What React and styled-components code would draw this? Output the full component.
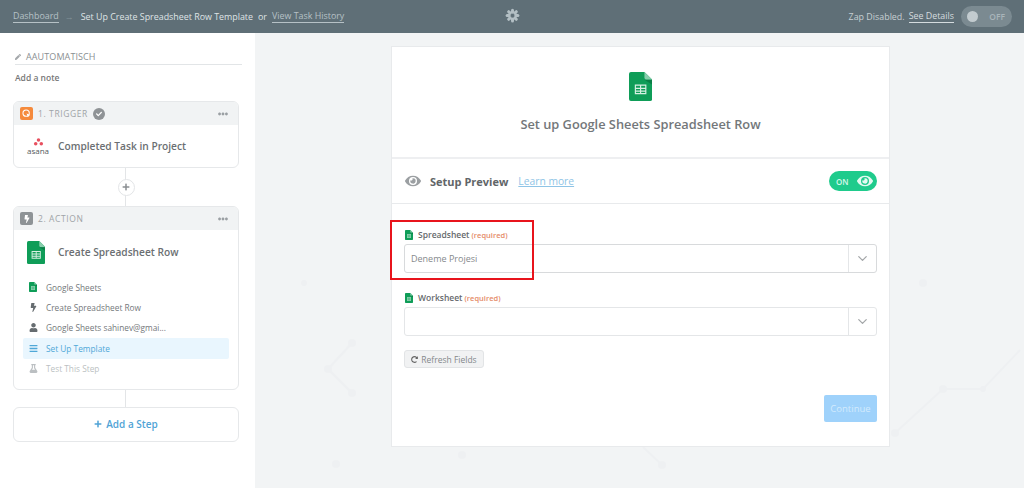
import React from 'react';
import styled, { createGlobalStyle } from 'styled-components';
import { FaEye, FaBolt, FaUser, FaBars, FaFlask, FaPlus, FaCheck, FaPen, FaRedoAlt, FaEllipsisH } from 'react-icons/fa';
import { FiChevronDown } from 'react-icons/fi';

const GlobalStyle = createGlobalStyle`
  html, body { margin: 0; padding: 0; height: 488px; overflow: hidden; }
  body { font-family: "Open Sans", "Liberation Sans", sans-serif; color: #666; background: #f2f4f5; }
  * { box-sizing: border-box; }
`;

const Page = styled.div`
  width: 1024px;
  height: 488px;
  display: flex;
  flex-direction: column;
`;

const TopBar = styled.header`
  height: 33px;
  background: #5f6f77;
  display: flex;
  align-items: center;
  padding: 0 12px 0 13px;
  font-size: 8.9px;
  color: #dfe4e6;
  position: relative;
`;

const Crumbs = styled.div`
  display: flex;
  align-items: center;
  gap: 5px;
  flex: 1;
`;

const BarLink = styled.span`
  color: ${(p) => p.$color || '#b6c1c6'};
  border-bottom: 1px solid currentColor;
  line-height: 12px;
`;

const Arrow = styled.span`
  color: #84939a;
  margin: 0 2px 0 1px;
`;

const GearSpot = styled.div`
  position: absolute;
  left: 505px;
  top: 8px;
  width: 15px;
  height: 15px;
  color: #b3bfc4;
  display: flex;
`;

const ZapStatus = styled.div`
  display: flex;
  align-items: center;
  gap: 4px;
  color: #c7d0d3;
  margin-right: 7px;
`;

const OffToggle = styled.div`
  width: 51px;
  height: 21px;
  border-radius: 11px;
  background: #7b8a91;
  display: flex;
  align-items: center;
  justify-content: space-between;
  padding: 0 7px 0 6px;
  font-size: 8.5px;
  font-weight: 600;
  color: #a9b5ba;

  &::before {
    content: '';
    width: 11px;
    height: 11px;
    border-radius: 50%;
    background: #c2cbcf;
  }
`;

const Body = styled.div`
  flex: 1;
  display: flex;
  position: relative;
  min-height: 0;
`;

const Sidebar = styled.aside`
  width: 255px;
  background: #fff;
  padding: 18px 13px 0;
`;

const ZapName = styled.div`
  margin: 0 0 0 2px;
  width: 227px;
  height: 14px;
  border-bottom: 1px solid #e2e5e7;
  display: flex;
  align-items: flex-start;
  gap: 5px;
  font-size: 9px;
  line-height: 12px;
  color: #8a8f92;
  letter-spacing: 0.1px;

  svg { margin-top: 3px; color: #a4a8ab; }
`;

const AddNote = styled.div`
  margin: 6px 0 0 2px;
  font-size: 8.5px;
  line-height: 13px;
  font-weight: 600;
  color: #777;
  height: 30px;
`;

const StepCard = styled.section`
  width: 226px;
  background: #fff;
  border: 1px solid #e6e8ea;
  border-radius: 6px;
  overflow: hidden;
`;

const StepHead = styled.div`
  height: 23px;
  background: #f1f3f4;
  display: flex;
  align-items: center;
  padding: 0 10px 0 6px;
  gap: 5px;
  font-size: 8.5px;
  font-weight: 500;
  letter-spacing: 0.6px;
  color: #a0a4a7;
`;

const StepBadge = styled.span`
  width: 13px;
  height: 13px;
  border-radius: 2px;
  background: ${(p) => p.$color};
  color: #fff;
  display: flex;
  align-items: center;
  justify-content: center;
  font-size: 8px;
`;

const DoneMark = styled.span`
  width: 12px;
  height: 12px;
  border-radius: 50%;
  background: #8f9396;
  color: #fff;
  display: flex;
  align-items: center;
  justify-content: center;
  font-size: 6px;
`;

const More = styled.span`
  margin-left: auto;
  color: #9a9fa3;
  display: flex;
  font-size: 10px;
`;

const StepTitle = styled.div`
  display: flex;
  align-items: center;
  height: ${(p) => p.$h}px;
  padding-left: 11px;
  font-size: 10.2px;
  font-weight: 600;
  color: #6b6f72;
`;

const TitleIcon = styled.span`
  width: 33px;
  flex: none;
  display: flex;
  justify-content: ${(p) => (p.$start ? 'flex-start' : 'center')};
  padding-right: 7px;
  padding-left: ${(p) => (p.$start ? '2px' : '0')};
`;

const AsanaMark = styled.span`
  display: flex;
  flex-direction: column;
  align-items: center;
  font-size: 8px;
  line-height: 7px;
  font-weight: 400;
  color: #555b60;
  gap: 1px;
`;

const Connector = styled.div`
  width: 226px;
  height: ${(p) => p.$h}px;
  display: flex;
  align-items: center;
  justify-content: center;
  position: relative;

  &::before {
    content: '';
    position: absolute;
    left: 112px;
    top: 0;
    bottom: 0;
    width: 1px;
    background: #e3e5e7;
  }
`;

const PlusDot = styled.span`
  width: 17px;
  height: 17px;
  border-radius: 50%;
  background: #fff;
  border: 1px solid #e3e5e7;
  color: #8b8f92;
  display: flex;
  align-items: center;
  justify-content: center;
  font-size: 8px;
  z-index: 1;
`;

const SubList = styled.ul`
  list-style: none;
  margin: 0;
  padding: 3px 9px 10px;
`;

const SubItem = styled.li`
  height: 20.4px;
  display: flex;
  align-items: center;
  padding-left: 5px;
  gap: 8px;
  font-size: 8.3px;
  font-weight: 500;
  border-radius: 2px;
  color: ${(p) => (p.$active ? '#4fa8d8' : p.$muted ? '#bbbfc2' : '#74787b')};
  background: ${(p) => (p.$active ? '#e9f6fe' : 'transparent')};
`;

const SubIcon = styled.span`
  width: 10px;
  display: flex;
  justify-content: center;
  font-size: 9px;
  color: ${(p) => p.$color || '#666c70'};
`;

const AddStep = styled.button`
  width: 226px;
  height: 35px;
  background: #fff;
  border: 1px solid #e6e8ea;
  border-radius: 6px;
  display: flex;
  align-items: center;
  justify-content: center;
  gap: 4px;
  font-family: inherit;
  font-size: 10px;
  font-weight: 600;
  color: #4fa3d6;
`;

const Canvas = styled.main`
  flex: 1;
  position: relative;
  background: #f2f4f5;
  padding: 13px 0 0 136px;
`;

const Backdrop = styled.svg`
  position: absolute;
  left: 0;
  top: 0;
  width: 769px;
  height: 455px;
`;

const Panel = styled.section`
  position: relative;
  width: 499px;
  height: 401px;
  background: #fff;
  border: 1px solid #e8eaec;
`;

const PanelHead = styled.div`
  height: 112px;
  border-bottom: 2px solid #eeeff1;
  display: flex;
  flex-direction: column;
  align-items: center;
  padding-top: 25px;
  gap: 15px;
`;

const PanelTitle = styled.h2`
  margin: 0;
  font-size: 12.8px;
  line-height: 16px;
  font-weight: 600;
  color: #73777a;
`;

const PreviewRow = styled.div`
  height: 45px;
  border-bottom: 1px solid #e8eaec;
  display: flex;
  align-items: center;
  padding: 0 12px 0 13px;
`;

const PreviewEye = styled.span`
  display: flex;
  color: #9b9fa2;
  font-size: 16px;
  margin-right: 9px;
`;

const PreviewTitle = styled.span`
  font-size: 11px;
  font-weight: 700;
  color: #616568;
  margin-right: 10px;
`;

const LearnMore = styled.span`
  font-size: 10.3px;
  color: #8fc4e6;
  text-decoration: underline;
`;

const OnToggle = styled.div`
  margin-left: auto;
  width: 48px;
  height: 20px;
  border-radius: 10px;
  background: #1fcb8c;
  color: #d6f6ea;
  display: flex;
  align-items: center;
  justify-content: space-between;
  padding: 0 4px 0 7px;
  font-size: 8px;
  font-weight: 600;

  svg { font-size: 16px; color: #e4f9f1; }
`;

const Form = styled.div`
  padding: 24px 12px 0;
`;

const Field = styled.div`
  margin-bottom: 18px;
`;

const FieldLabel = styled.label`
  display: flex;
  align-items: center;
  height: 13px;
  gap: 5px;
  padding-left: 1px;
  font-size: 8.5px;
  font-weight: 600;
  color: #666a6d;
  margin-bottom: 3px;
`;

const Required = styled.span`
  color: #e58b68;
  font-size: 7.5px;
  margin-left: -3px;
`;

const Select = styled.div`
  height: 29px;
  width: 473px;
  display: flex;
  border: 1px solid ${(p) => (p.$strong ? '#d8dadc' : '#e4e6e8')};
  border-radius: 3px;
`;

const SelectValue = styled.div`
  flex: 1;
  padding-left: 6px;
  display: flex;
  align-items: center;
  font-size: 9px;
  color: #85898c;
`;

const SelectCaret = styled.div`
  width: 28px;
  border-left: 1px solid #e4e6e8;
  display: flex;
  align-items: center;
  justify-content: center;
  color: #a3a6a8;
  font-size: 15px;
`;

const RefreshButton = styled.button`
  height: 18px;
  width: 80px;
  margin-top: -4px;
  padding: 0;
  background: #f1f2f3;
  border: 1px solid #e2e4e6;
  border-radius: 3px;
  display: flex;
  align-items: center;
  justify-content: center;
  gap: 3px;
  font-family: inherit;
  font-size: 8.5px;
  color: #84888b;

  svg { font-size: 7px; color: #666; }
`;

const FormFoot = styled.div`
  display: flex;
  justify-content: flex-end;
  margin-top: 27px;
`;

const ContinueButton = styled.button`
  width: 53px;
  height: 27px;
  padding: 0;
  background: #9fd2fb;
  border: none;
  border-radius: 2px;
  font-family: inherit;
  font-size: 9.5px;
  color: #d2eafd;
`;

const Highlight = styled.div`
  position: absolute;
  left: -2px;
  top: 173px;
  width: 144px;
  height: 60px;
  border: 2px solid #e8141c;
  pointer-events: none;
`;

const SheetIcon = ({ size }) => (
  <svg width={size * 0.8} height={size} viewBox="0 0 24 30" aria-hidden="true">
    <path d="M2 0h14l8 8v20a2 2 0 0 1-2 2H2a2 2 0 0 1-2-2V2a2 2 0 0 1 2-2z" fill="#0f9d58" />
    <path d="M16 0l8 8h-6a2 2 0 0 1-2-2z" fill="#87ceac" />
    <path d="M16 8h8v5z" fill="#0b7f47" />
    <path d="M6 13h12v10H6z M7.2 14.2v2.2h4.2v-2.2z M12.6 14.2v2.2h4.2v-2.2z M7.2 17.6v1.6h4.2v-1.6z M12.6 17.6v1.6h4.2v-1.6z M7.2 20.4v1.4h4.2v-1.4z M12.6 20.4v1.4h4.2v-1.4z" fill="#d7f0e3" fillRule="evenodd" />
  </svg>
);

const TriggerGlyph = () => (
  <svg width="9" height="9" viewBox="0 0 12 12" aria-hidden="true">
    <circle cx="5.5" cy="5.5" r="4.2" fill="none" stroke="#fff" strokeWidth="1.4" />
    <path d="M6 6l5 2-2 1-1 2z" fill="#fff" />
  </svg>
);

const AsanaDots = () => (
  <svg width="11" height="8" viewBox="0 0 13 10" aria-hidden="true">
    <circle cx="6.5" cy="2.4" r="2.2" fill="#e8505f" />
    <circle cx="3" cy="7.2" r="2.2" fill="#e8505f" />
    <circle cx="10" cy="7.2" r="2.2" fill="#e8505f" />
  </svg>
);

const Gear = () => (
  <svg width="15" height="15" viewBox="0 0 24 24" aria-hidden="true">
    <g fill="currentColor">
      {[0, 45, 90, 135, 180, 225, 270, 315].map((a) => (
        <rect key={a} x="9.6" y="1" width="4.8" height="8" rx="2.4" transform={`rotate(${a} 12 12)`} />
      ))}
    </g>
    <circle cx="12" cy="12" r="5.6" fill="none" stroke="currentColor" strokeWidth="2.4" />
  </svg>
);

const subSteps = [
  { label: 'Google Sheets', icon: <SheetIcon size={10} /> },
  { label: 'Create Spreadsheet Row', icon: <FaBolt /> },
  { label: 'Google Sheets sahinev@gmai...', icon: <FaUser /> },
  { label: 'Set Up Template', icon: <FaBars />, color: '#4fa8d8', active: true },
  { label: 'Test This Step', icon: <FaFlask />, color: '#bbbfc2', muted: true },
];

const App = () => (
  <Page>
    <GlobalStyle />
    <TopBar>
      <Crumbs>
        <BarLink>Dashboard</BarLink>
        <Arrow>→</Arrow>
        <span>Set Up Create Spreadsheet Row Template</span>
        <span>or</span>
        <BarLink>View Task History</BarLink>
      </Crumbs>
      <GearSpot><Gear /></GearSpot>
      <ZapStatus>
        <span>Zap Disabled.</span>
        <BarLink $color="#d5dcdf">See Details</BarLink>
      </ZapStatus>
      <OffToggle>OFF</OffToggle>
    </TopBar>
    <Body>
      <Sidebar>
        <ZapName><FaPen size={6} />AAUTOMATISCH</ZapName>
        <AddNote>Add a note</AddNote>
        <StepCard>
          <StepHead>
            <StepBadge $color="#f58a3c"><TriggerGlyph /></StepBadge>
            1. TRIGGER
            <DoneMark><FaCheck /></DoneMark>
            <More><FaEllipsisH /></More>
          </StepHead>
          <StepTitle $h={42}>
            <TitleIcon>
              <AsanaMark><AsanaDots />asana</AsanaMark>
            </TitleIcon>
            Completed Task in Project
          </StepTitle>
        </StepCard>
        <Connector $h={38}><PlusDot><FaPlus /></PlusDot></Connector>
        <StepCard>
          <StepHead>
            <StepBadge $color="#8e9396"><FaBolt /></StepBadge>
            2. ACTION
            <More><FaEllipsisH /></More>
          </StepHead>
          <StepTitle $h={44}>
            <TitleIcon $start><SheetIcon size={23} /></TitleIcon>
            Create Spreadsheet Row
          </StepTitle>
          <SubList>
            {subSteps.map((s) => (
              <SubItem key={s.label} $active={s.active} $muted={s.muted}>
                <SubIcon $color={s.color}>{s.icon}</SubIcon>
                {s.label}
              </SubItem>
            ))}
          </SubList>
        </StepCard>
        <Connector $h={17} />
        <AddStep><FaPlus size={8} />Add a Step</AddStep>
      </Sidebar>
      <Canvas>
        <Backdrop viewBox="0 0 769 455" aria-hidden="true">
          <g fill="none" stroke="#eef0f2" strokeWidth="2">
            <path d="M97 310L73 336L97 360" />
            <path d="M640 400L688 356H728L765 317" />
            <path d="M388 414L407 432" />
          </g>
          <g fill="#eef0f2">
            <circle cx="640" cy="400" r="4" />
            <circle cx="688" cy="356" r="4" />
            <circle cx="728" cy="356" r="3" />
            <circle cx="97" cy="310" r="4" />
            <circle cx="73" cy="336" r="4" />
            <circle cx="97" cy="360" r="4" />
            <circle cx="407" cy="432" r="4" />
            <circle cx="207" cy="422" r="4" />
            <circle cx="81" cy="431" r="4" />
            <circle cx="49" cy="250" r="3" />
            <circle cx="668" cy="250" r="4" />
          </g>
        </Backdrop>
        <Panel>
          <PanelHead>
            <SheetIcon size={29} />
            <PanelTitle>Set up Google Sheets Spreadsheet Row</PanelTitle>
          </PanelHead>
          <PreviewRow>
            <PreviewEye><FaEye /></PreviewEye>
            <PreviewTitle>Setup Preview</PreviewTitle>
            <LearnMore>Learn more</LearnMore>
            <OnToggle>ON<FaEye /></OnToggle>
          </PreviewRow>
          <Form>
            <Field>
              <FieldLabel><SheetIcon size={10} />Spreadsheet <Required>(required)</Required></FieldLabel>
              <Select $strong>
                <SelectValue>Deneme Projesi</SelectValue>
                <SelectCaret><FiChevronDown /></SelectCaret>
              </Select>
            </Field>
            <Field>
              <FieldLabel><SheetIcon size={10} />Worksheet <Required>(required)</Required></FieldLabel>
              <Select>
                <SelectValue />
                <SelectCaret><FiChevronDown /></SelectCaret>
              </Select>
            </Field>
            <RefreshButton><FaRedoAlt />Refresh Fields</RefreshButton>
            <FormFoot><ContinueButton>Continue</ContinueButton></FormFoot>
          </Form>
          <Highlight />
        </Panel>
      </Canvas>
    </Body>
  </Page>
);

export default App;
